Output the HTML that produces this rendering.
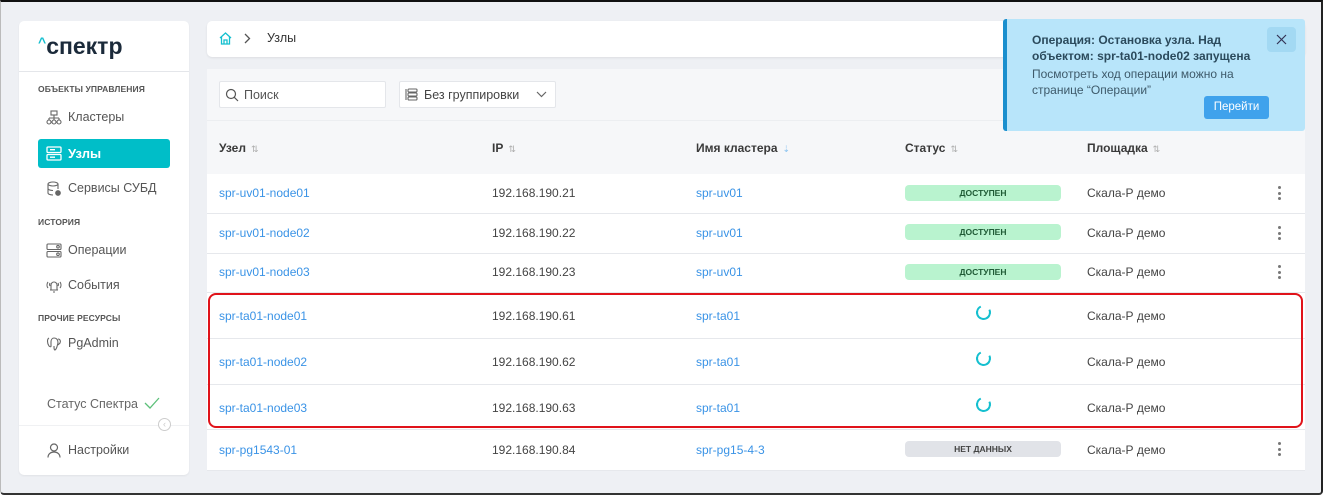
<!DOCTYPE html>
<html><head><meta charset="utf-8"><style>
*{box-sizing:border-box;margin:0;padding:0}
body{width:1323px;height:495px;overflow:hidden;background:#fff;font-family:"Liberation Sans",sans-serif;font-size:12px;color:#444;position:relative}
.frame{position:absolute;left:0;top:0;width:1323px;height:495px;background:#eef0f4;border-top:2px solid #111;border-right:2px solid #222;border-bottom:2px solid #333;border-left:1px solid #bbb;border-radius:0 0 4px 4px}
.a{position:absolute;white-space:nowrap}
.side{left:19px;top:21px;width:170px;height:454px;background:#fff;border-radius:5px;box-shadow:0 1px 2px rgba(0,0,0,.06)}
.sec{font-size:8.5px;font-weight:bold;color:#555;letter-spacing:.1px}
.nav{font-size:12.5px;color:#555}
.link{color:#3a93e6}
.hd{font-weight:bold;color:#3a3a3a;font-size:12px}
.sort{color:#aaa;font-size:9px;font-weight:normal;margin-left:5px}
.row{position:absolute;left:207px;width:1098px;background:#fff;border-bottom:1px solid #e6e8ec}
.badge{position:absolute;left:905px;width:156px;height:16px;border-radius:4px;background:#b9f3cf;color:#1f5a35;font-size:8.5px;font-weight:bold;text-align:center;line-height:16px}
.dots{position:absolute;left:1278px;width:3px}
.dots i{display:block;width:3px;height:3px;border-radius:50%;background:#777;margin-bottom:2.5px}
.spin{position:absolute;left:976px;width:15px;height:15px;border-radius:50%;border:2.5px solid #14bfcf;border-top-color:transparent;transform:rotate(20deg)}
</style></head><body>
<div class="frame"></div>

<div class="a side"></div>
<div class="a" style="left:38px;top:33px;font-size:23px;font-weight:bold;color:#1b2a3a;letter-spacing:0"><span style="color:#14bfcf;font-size:14px;vertical-align:7px">^</span>спектр</div>
<div class="a" style="left:19px;top:71px;width:170px;height:1px;background:#e4e6ea"></div>
<div class="a sec" style="left:38px;top:84px">ОБЪЕКТЫ УПРАВЛЕНИЯ</div>
<svg class="a" style="left:46px;top:110px" width="16" height="16" viewBox="0 0 16 16" fill="none" stroke="#666" stroke-width="1.1"><rect x="5" y="1" width="6" height="4"/><path d="M8 5v3M3 8h10M3 8v2M13 8v2M8 8v2"/><circle cx="3" cy="12" r="2"/><circle cx="8" cy="12" r="2"/><circle cx="13" cy="12" r="2"/></svg>
<div class="a nav" style="left:68px;top:110px">Кластеры</div>
<div class="a" style="left:38px;top:139px;width:132px;height:29px;background:#00bec8;border-radius:3px"></div>
<svg class="a" style="left:46px;top:146px" width="16" height="15" viewBox="0 0 16 15" fill="none" stroke="#fff" stroke-width="1.3"><rect x="1" y="1" width="14" height="5.5" rx="1"/><rect x="1" y="8.5" width="14" height="5.5" rx="1"/><path d="M4 3.7h5M4 11.2h5"/></svg>
<div class="a" style="left:68px;top:146px;font-size:13px;font-weight:bold;color:#fff">Узлы</div>
<svg class="a" style="left:46px;top:181px" width="16" height="16" viewBox="0 0 16 16" fill="none" stroke="#666" stroke-width="1.1"><ellipse cx="7" cy="3" rx="5" ry="2"/><path d="M2 3v9c0 1 2 2 5 2M12 3v5M2 7.5c0 1 2 2 5 2"/><circle cx="12" cy="12" r="2.3" fill="#666"/></svg>
<div class="a nav" style="left:68px;top:181px">Сервисы СУБД</div>
<div class="a sec" style="left:38px;top:217px">ИСТОРИЯ</div>
<svg class="a" style="left:46px;top:243px" width="16" height="15" viewBox="0 0 16 15" fill="none" stroke="#666" stroke-width="1.1"><rect x="1" y="1" width="14" height="5.5" rx="1"/><rect x="1" y="8.5" width="14" height="5.5" rx="1"/><circle cx="12" cy="3.7" r="1.3"/><circle cx="12" cy="11.2" r="1.3"/></svg>
<div class="a nav" style="left:68px;top:243px">Операции</div>
<svg class="a" style="left:46px;top:278px" width="16" height="15" viewBox="0 0 16 15" fill="none" stroke="#666" stroke-width="1.1"><path d="M5 12V7a3 3 0 016 0v5M4 12h8M7 14h2M2 4a5 5 0 000 6M14 4a5 5 0 010 6M4 5a3 3 0 000 3M12 5a3 3 0 010 3"/></svg>
<div class="a nav" style="left:68px;top:278px">События</div>
<div class="a sec" style="left:38px;top:313px">ПРОЧИЕ РЕСУРСЫ</div>
<svg class="a" style="left:46px;top:336px" width="17" height="16" viewBox="0 0 17 16" fill="none" stroke="#666" stroke-width="1.1"><path d="M3 2c-2 1-2 5 0 8 1 1 2 1 2 0V6M8 2c-2 0-3 2-3 4M8 2c3 0 4 2 4 5-1 3-1 6-3 7-1 0-1-2-1-4M12 3c2 0 3 2 2 4l-2 2"/></svg>
<div class="a nav" style="left:68px;top:336px">PgAdmin</div>
<div class="a" style="left:47px;top:397px;font-size:12.5px;color:#666">Статус Спектра</div>
<svg class="a" style="left:144px;top:397px" width="16" height="12" viewBox="0 0 16 12" fill="none" stroke="#5dc07a" stroke-width="1.3"><path d="M1 6l5 5L15 1"/></svg>
<div class="a" style="left:19px;top:425px;width:170px;height:1px;background:#f0f1f3"></div>
<div class="a" style="left:158px;top:418px;width:13px;height:13px;border:1px solid #ccc;border-radius:50%;background:#fff;color:#ccc;font-size:9px;line-height:11px;text-align:center">‹</div>
<svg class="a" style="left:47px;top:443px" width="14" height="15" viewBox="0 0 14 15" fill="none" stroke="#666" stroke-width="1.2"><circle cx="7" cy="4.5" r="3.5"/><path d="M1 14.5c0-3.5 2.7-5.5 6-5.5s6 2 6 5.5"/></svg>
<div class="a nav" style="left:68px;top:443px">Настройки</div>

<!-- breadcrumb -->
<div class="a" style="left:207px;top:21px;width:1098px;height:36px;background:#fff;border-radius:5px;box-shadow:0 1px 2px rgba(0,0,0,.08)"></div>
<svg class="a" style="left:219px;top:32px" width="13" height="13" viewBox="0 0 13 13" fill="none" stroke="#14bfcf" stroke-width="1.3"><path d="M1 6l5.5-5L12 6M2.5 5v7h8V5M5 12V8h3v4"/></svg>
<svg class="a" style="left:244px;top:33px" width="7" height="11" viewBox="0 0 7 11" fill="none" stroke="#555" stroke-width="1.3"><path d="M1 1l4.5 4.5L1 10"/></svg>
<div class="a" style="left:267px;top:31px;font-size:12.5px;color:#333">Узлы</div>

<!-- content -->
<div class="a" style="left:207px;top:69px;width:1098px;height:402px;background:#f6f7f9"></div>
<div class="a" style="left:219px;top:81px;width:167px;height:27px;background:#fff;border:1px solid #e4e6ea;border-radius:2px"></div>
<svg class="a" style="left:225px;top:88px" width="14" height="14" viewBox="0 0 14 14" fill="none" stroke="#555" stroke-width="1.2"><circle cx="6" cy="6" r="4.5"/><path d="M9.3 9.3L13 13"/></svg>
<div class="a" style="left:244px;top:88px;font-size:12.5px;color:#555">Поиск</div>
<div class="a" style="left:399px;top:81px;width:157px;height:27px;background:#fff;border:1px solid #e4e6ea;border-radius:2px"></div>
<svg class="a" style="left:405px;top:88px" width="13" height="13" viewBox="0 0 13 13" fill="none" stroke="#666" stroke-width="1.1"><rect x="3" y="1" width="9" height="3" rx="1"/><rect x="3" y="5" width="9" height="3" rx="1"/><rect x="3" y="9" width="9" height="3" rx="1"/><path d="M1 1v11"/></svg>
<div class="a" style="left:424px;top:88px;font-size:12.5px;color:#444">Без группировки</div>
<svg class="a" style="left:536px;top:91px" width="11" height="7" viewBox="0 0 11 7" fill="none" stroke="#666" stroke-width="1.2"><path d="M1 1l4.5 4.5L10 1"/></svg>
<div class="a" style="left:207px;top:120px;width:1098px;height:1px;background:#eceef1"></div>
<div class="a hd" style="left:219px;top:141px">Узел<span class="sort">⇅</span></div>
<div class="a hd" style="left:492px;top:141px">IP<span class="sort">⇅</span></div>
<div class="a hd" style="left:696px;top:141px">Имя кластера<span class="sort" style="color:#8cc4f0">⇣</span></div>
<div class="a hd" style="left:905px;top:141px">Статус<span class="sort">⇅</span></div>
<div class="a hd" style="left:1087px;top:141px">Площадка<span class="sort">⇅</span></div>

<div class="row" style="top:174px;height:40px"></div>
<div class="row" style="top:214px;height:40px"></div>
<div class="row" style="top:254px;height:39px"></div>
<div class="row" style="top:293px;height:46px"></div>
<div class="row" style="top:339px;height:46px"></div>
<div class="row" style="top:385px;height:45px"></div>
<div class="row" style="top:430px;height:41px"></div>

<div class="a link" style="left:219px;top:186px">spr-uv01-node01</div><div class="a" style="left:492px;top:186px">192.168.190.21</div><div class="a link" style="left:696px;top:186px">spr-uv01</div><div class="badge" style="top:185px">ДОСТУПЕН</div><div class="a" style="left:1087px;top:186px">Скала-Р демо</div><div class="dots" style="top:186px"><i></i><i></i><i></i></div>
<div class="a link" style="left:219px;top:226px">spr-uv01-node02</div><div class="a" style="left:492px;top:226px">192.168.190.22</div><div class="a link" style="left:696px;top:226px">spr-uv01</div><div class="badge" style="top:224px">ДОСТУПЕН</div><div class="a" style="left:1087px;top:226px">Скала-Р демо</div><div class="dots" style="top:226px"><i></i><i></i><i></i></div>
<div class="a link" style="left:219px;top:265px">spr-uv01-node03</div><div class="a" style="left:492px;top:265px">192.168.190.23</div><div class="a link" style="left:696px;top:265px">spr-uv01</div><div class="badge" style="top:264px">ДОСТУПЕН</div><div class="a" style="left:1087px;top:265px">Скала-Р демо</div><div class="dots" style="top:265px"><i></i><i></i><i></i></div>
<div class="a link" style="left:219px;top:309px">spr-ta01-node01</div><div class="a" style="left:492px;top:309px">192.168.190.61</div><div class="a link" style="left:696px;top:309px">spr-ta01</div><div class="spin" style="top:305px"></div><div class="a" style="left:1087px;top:309px">Скала-Р демо</div>
<div class="a link" style="left:219px;top:355px">spr-ta01-node02</div><div class="a" style="left:492px;top:355px">192.168.190.62</div><div class="a link" style="left:696px;top:355px">spr-ta01</div><div class="spin" style="top:351px"></div><div class="a" style="left:1087px;top:355px">Скала-Р демо</div>
<div class="a link" style="left:219px;top:401px">spr-ta01-node03</div><div class="a" style="left:492px;top:401px">192.168.190.63</div><div class="a link" style="left:696px;top:401px">spr-ta01</div><div class="spin" style="top:397px"></div><div class="a" style="left:1087px;top:401px">Скала-Р демо</div>
<div class="a link" style="left:219px;top:443px">spr-pg1543-01</div><div class="a" style="left:492px;top:443px">192.168.190.84</div><div class="a link" style="left:696px;top:443px">spr-pg15-4-3</div><div class="badge" style="top:441px;background:#e1e3e8;color:#444">НЕТ ДАННЫХ</div><div class="a" style="left:1087px;top:443px">Скала-Р демо</div><div class="dots" style="top:442px"><i></i><i></i><i></i></div>

<div class="a" style="left:208px;top:293px;width:1095px;height:135px;border:2px solid #e0131a;border-radius:8px"></div>

<!-- toast -->
<div class="a" style="left:1003px;top:19px;width:302px;height:112px;background:#b8e5fa;border-left:4px solid #1a8fce;border-radius:3px"></div>
<div class="a" style="left:1032px;top:32px;font-size:12px;font-weight:bold;color:#2b4a5c;line-height:16px">Операция: Остановка узла. Над<br>объектом: spr-ta01-node02 запущена</div>
<div class="a" style="left:1032px;top:66px;font-size:12px;color:#3e5a6a;line-height:16px">Посмотреть ход операции можно на<br>странице “Операции”</div>
<div class="a" style="left:1267px;top:27px;width:29px;height:25px;background:#a3d9f3;border-radius:4px"></div>
<svg class="a" style="left:1276px;top:34px" width="11" height="11" viewBox="0 0 11 11" fill="none" stroke="#335" stroke-width="1.2"><path d="M1 1l9 9M10 1l-9 9"/></svg>
<div class="a" style="left:1204px;top:96px;width:65px;height:23px;background:#3fa2ec;border-radius:3px;color:#fff;font-size:11.5px;text-align:center;line-height:23px">Перейти</div>
</body></html>
